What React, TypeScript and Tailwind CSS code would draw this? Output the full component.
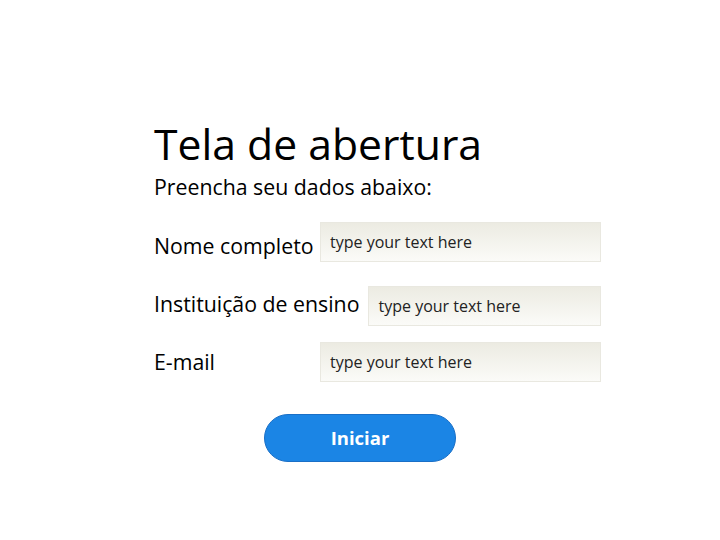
import React from 'react';

const fieldClass =
  'flex-1 h-10 px-[9px] border border-[#e9e8e0] bg-gradient-to-b from-[#ecebe2] to-[#fbfbf8] text-[16px] text-[#222] placeholder-[#222] outline-none';

export default function App() {
  return (
    <div className="min-h-[540px] w-[720px] bg-white font-['Open_Sans',sans-serif] text-black">
      <div className="pl-[154px] pt-[120px]">
        <div className="w-[447px]">
          {/* Heading */}
          <h1 className="text-[42.7px] leading-[48px]">Tela de abertura</h1>
          <p className="mt-[5px] text-[21.3px] leading-[28px]">Preencha seu dados abaixo:</p>

          {/* Fields */}
          <div className="mt-[21px] flex items-center">
            <label className="w-[166px] shrink-0 pt-[8px] text-[21.3px] leading-[28px]">Nome completo</label>
            <input type="text" className={fieldClass} placeholder="type your text here" />
          </div>

          <div className="mt-[24px] flex items-center">
            <label className="shrink-0 pr-[9px] pb-[4px] text-[21.3px] leading-[28px]">Instituição de ensino</label>
            <input type="text" className={fieldClass} placeholder="type your text here" />
          </div>

          <div className="mt-[16px] flex items-center">
            <label className="w-[166px] shrink-0 text-[21.3px] leading-[28px]">E-mail</label>
            <input type="text" className={fieldClass} placeholder="type your text here" />
          </div>
        </div>
      </div>

      {/* Action */}
      <div className="mt-[32px] flex justify-center">
        <button
          type="button"
          className="h-12 w-[192px] rounded-full border border-[#1a6fc6] bg-[#1b85e5] text-[18.5px] font-bold text-white"
        >
          Iniciar
        </button>
      </div>
    </div>
  );
}
